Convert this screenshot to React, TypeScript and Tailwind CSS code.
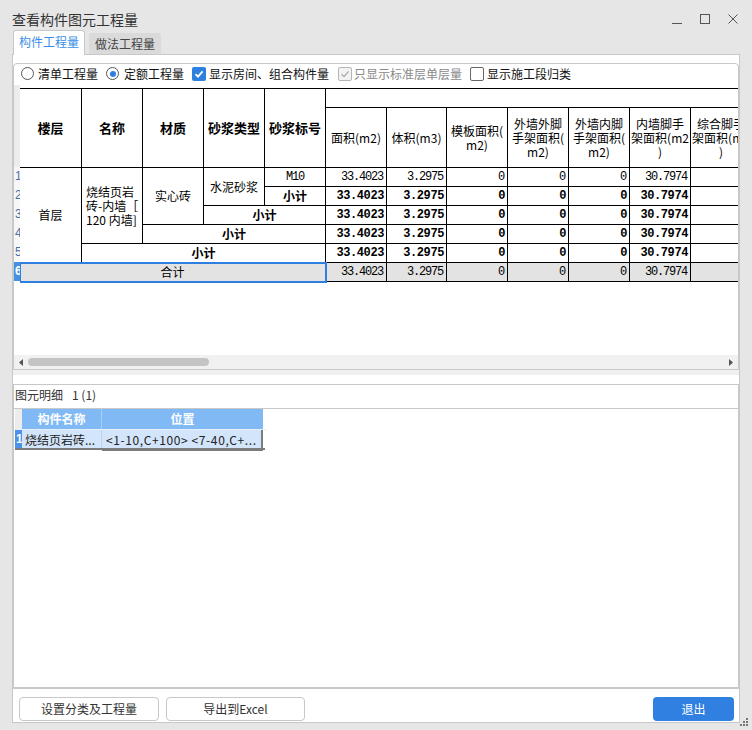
import React from 'react';

const cjk = "font-['Noto_Sans_CJK_SC',sans-serif]";
const mono = "font-['Liberation_Mono',monospace]";

function Radio({ checked }: { checked?: boolean }) {
  return (
    <span className="w-[13px] h-[13px] rounded-full border border-[#555] bg-white flex items-center justify-center shrink-0">
      {checked && <span className="w-[6px] h-[6px] rounded-full bg-[#2e7fe0]" />}
    </span>
  );
}

function Check({ state }: { state: 'on' | 'off' | 'dis' }) {
  if (state === 'on')
    return (
      <span className="w-[14px] h-[14px] rounded-[2px] bg-[#2d7fe0] flex items-center justify-center shrink-0">
        <svg width="10" height="10" viewBox="0 0 10 10">
          <path d="M1.5 5.2 L4 7.6 L8.6 2.4" fill="none" stroke="#fff" strokeWidth="1.8" />
        </svg>
      </span>
    );
  if (state === 'dis')
    return (
      <span className="w-[14px] h-[14px] rounded-[2px] border border-[#b5b5b5] bg-[#f3f3f3] flex items-center justify-center shrink-0">
        <svg width="10" height="10" viewBox="0 0 10 10">
          <path d="M1.5 5.2 L4 7.6 L8.6 2.4" fill="none" stroke="#a8a8a8" strokeWidth="1.3" />
        </svg>
      </span>
    );
  return <span className="block w-[14px] h-[14px] rounded-[2px] border border-[#666] bg-white shrink-0" />;
}

const cell = 'border border-black p-0';
const hdr = `${cell} text-[13px] font-bold text-center align-middle text-black leading-[16px]`;
const sub = `${cell} text-[12px] font-normal text-center align-middle text-black leading-[14px] whitespace-nowrap overflow-hidden`;
const numR = `${cell} ${mono} text-right pr-[3px] text-[12px] tracking-[-1.2px] leading-[14px] text-black`;
const numB = `${cell} ${mono} text-right pr-[2px] text-[12px] tracking-[-0.4px] font-bold leading-[14px] text-black`;

const vals = ['33.4023', '3.2975', '0', '0', '0', '30.7974', ''];

function Nums({ bold }: { bold?: boolean }) {
  return (
    <>
      {vals.map((v, i) => (
        <td key={i} className={bold ? numB : numR}>
          {v}
        </td>
      ))}
    </>
  );
}

const subt = `${cell} text-center text-[12px] font-bold leading-[14px] text-black`;

export default function App() {
  return (
    <div className={`w-[752px] h-[730px] bg-[#e6e6e6] flex flex-col relative overflow-hidden ${cjk} text-[#333]`}>
      {/* title bar */}
      <div className="flex items-start h-[30px] shrink-0">
        <div className="pl-[12px] pt-[9px] text-[14px] leading-[20px] text-[#333]">查看构件图元工程量</div>
        <div className="ml-auto mt-[14px] mr-[14px] flex gap-[18px]">
          <svg width="10" height="10" viewBox="0 0 10 10">
            <path d="M0 9.5 H10" stroke="#555" strokeWidth="1" />
          </svg>
          <svg width="10" height="10" viewBox="0 0 10 10">
            <rect x="0.5" y="0.5" width="9" height="9" fill="none" stroke="#555" strokeWidth="1" />
          </svg>
          <svg width="10" height="10" viewBox="0 0 10 10">
            <path d="M0.5 0.5 L9.5 9.5 M9.5 0.5 L0.5 9.5" stroke="#555" strokeWidth="1" />
          </svg>
        </div>
      </div>

      {/* tabs */}
      <div className="flex items-end h-[24px] pl-[13px] relative z-10 shrink-0">
        <div className="h-[25px] w-[72px] -mb-px bg-white border border-[#c8c8c8] border-b-0 rounded-t-[3px] flex items-center justify-center text-[12px] text-[#3a8ee6] leading-[16px] pb-[2px]">
          构件工程量
        </div>
        <div className="h-[21px] w-[72px] ml-[4px] bg-[#dadada] rounded-t-[2px] flex items-center justify-center text-[12px] text-[#444] leading-[16px]">
          做法工程量
        </div>
      </div>

      {/* panel */}
      <div className="ml-[12px] w-[728px] h-[669px] border border-[#c8c8c8] bg-white flex flex-col shrink-0">
        <div className="h-[8px] shrink-0" />
        {/* top box */}
        <div className="h-[307px] border border-[#c8c8c8] rounded-t-[4px] flex flex-col shrink-0 overflow-hidden">
          <div className="h-[21px] flex items-center pl-[7px] pb-[2px] text-[12px] leading-[16px] text-[#111] shrink-0">
            <Radio />
            <span className="ml-[4px]">清单工程量</span>
            <span className="ml-[8px]"><Radio checked /></span>
            <span className="ml-[5px]">定额工程量</span>
            <span className="ml-[8px]"><Check state="on" /></span>
            <span className="ml-[3px]">显示房间、组合构件量</span>
            <span className="ml-[9px]"><Check state="dis" /></span>
            <span className="ml-[2px] text-[#8a8a8a]">只显示标准层单层量</span>
            <span className="ml-[8px]"><Check state="off" /></span>
            <span className="ml-[3px]">显示施工段归类</span>
          </div>
          {/* grid */}
          <div className="h-[270px] flex shrink-0 bg-white">
            <div className="w-[6px] flex flex-col shrink-0 overflow-hidden text-[12px] leading-[19px] font-['Liberation_Sans',sans-serif]">
              <div className="h-[82px] bg-[#ececec] shrink-0" />
              {[1, 2, 3, 4, 5].map((n) => (
                <div key={n} className="h-[19px] text-[#4a6fa5] pl-[1px] bg-[#f7f7f7] shrink-0">
                  {n}
                </div>
              ))}
              <div className="h-[19px] bg-[#4a90e2] text-white font-bold pl-[1px] shrink-0">6</div>
            </div>
            <div className="w-[718px] overflow-hidden pt-[3px]">
              <table className="border-collapse table-fixed w-[732px] -ml-px">
                <colgroup>
                  <col className="w-[62px]" />
                  <col className="w-[61px]" />
                  <col className="w-[61px]" />
                  <col className="w-[61px]" />
                  <col className="w-[61px]" />
                  <col className="w-[61px]" />
                  <col className="w-[60px]" />
                  <col className="w-[61px]" />
                  <col className="w-[61px]" />
                  <col className="w-[61px]" />
                  <col className="w-[61px]" />
                  <col className="w-[61px]" />
                </colgroup>
                <tbody>
                  <tr className="h-[19px]">
                    <th rowSpan={2} className={hdr}>楼层</th>
                    <th rowSpan={2} className={hdr}>名称</th>
                    <th rowSpan={2} className={hdr}>材质</th>
                    <th rowSpan={2} className={hdr}>砂浆类型</th>
                    <th rowSpan={2} className={hdr}>砂浆标号</th>
                    <th colSpan={7} className={cell}></th>
                  </tr>
                  <tr className="h-[60px]">
                    <th className={sub}>面积(m2)</th>
                    <th className={sub}>体积(m3)</th>
                    <th className={sub}>模板面积(<br />m2)</th>
                    <th className={sub}>外墙外脚<br />手架面积(<br />m2)</th>
                    <th className={sub}>外墙内脚<br />手架面积(<br />m2)</th>
                    <th className={sub}>内墙脚手<br />架面积(m2<br />)</th>
                    <th className={sub}>综合脚手<br />架面积(m2<br />)</th>
                  </tr>
                  <tr className="h-[19px]">
                    <td rowSpan={5} className={`${cell} text-center text-[12px] leading-[14px] text-black`}>首层</td>
                    <td rowSpan={4} className={`${cell} text-left pl-[4px] text-[12px] leading-[14px] text-black whitespace-nowrap`}>
                      烧结页岩<br />砖-内墙［<br />120 内墙]
                    </td>
                    <td rowSpan={3} className={`${cell} text-center text-[12px] leading-[14px] text-black`}>实心砖</td>
                    <td rowSpan={2} className={`${cell} text-center text-[12px] leading-[14px] text-black`}>水泥砂浆</td>
                    <td className={`${cell} ${mono} text-center text-[12px] tracking-[-1.2px] leading-[14px] text-black`}>M10</td>
                    <Nums />
                  </tr>
                  <tr className="h-[19px]">
                    <td className={subt}>小计</td>
                    <Nums bold />
                  </tr>
                  <tr className="h-[19px]">
                    <td colSpan={2} className={subt}>小计</td>
                    <Nums bold />
                  </tr>
                  <tr className="h-[19px]">
                    <td colSpan={3} className={subt}>小计</td>
                    <Nums bold />
                  </tr>
                  <tr className="h-[19px]">
                    <td colSpan={4} className={subt}>小计</td>
                    <Nums bold />
                  </tr>
                  <tr className="h-[19px] bg-[#e3e3e3]">
                    <td colSpan={5} className={`${cell} text-center text-[12px] leading-[14px] text-black outline-2 outline-[#2e7fe0] -outline-offset-1`}>合计</td>
                    <Nums />
                  </tr>
                </tbody>
              </table>
            </div>
          </div>
          {/* scrollbar */}
          <div className="h-[14px] bg-[#f1f1f1] flex items-center shrink-0">
            <svg width="4" height="7" viewBox="0 0 4 7" className="ml-[5px]">
              <path d="M4 0 L0 3.5 L4 7 Z" fill="#555" />
            </svg>
            <div className="ml-[5px] w-[181px] h-[8px] rounded-full bg-[#c4c4c4]" />
            <svg width="4" height="7" viewBox="0 0 4 7" className="ml-auto mr-[5px]">
              <path d="M0 0 L4 3.5 L0 7 Z" fill="#555" />
            </svg>
          </div>
        </div>
        {/* splitter */}
        <div className="h-[14px] flex flex-col shrink-0">
          <div className="h-[5px] bg-[#f0f0f0]" />
          <div className="flex-1 bg-white" />
        </div>
        {/* lower box */}
        <div className="h-[305px] border border-[#c8c8c8] border-b-2 flex flex-col shrink-0">
          <div className="h-[23px] flex items-center pl-px pb-[4px] text-[12px] leading-[16px] text-[#333] shrink-0">
            <span>图元明细</span>
            <span className="ml-[9px]">1 (1)</span>
          </div>
          <div className="flex-1 border-t border-[#c8c8c8] pl-px">
            <div className="flex flex-col w-[251px]">
              <div className="flex h-[20px]">
                <div className="w-[7px] bg-[#ececec]" />
                <div className="w-[80px] bg-[#80b9f4] border-r border-[#a9cff6] text-white font-bold text-[12px] leading-[20px] text-center">构件名称</div>
                <div className="w-[161px] bg-[#80b9f4] text-white font-bold text-[12px] leading-[20px] text-center">位置</div>
              </div>
              <div className="flex h-[22px] border-t border-[#e6eef8]">
                <div className="w-[7px] h-[19px] bg-[#4b93e9] text-white font-bold text-[12px] leading-[19px] font-['Liberation_Sans',sans-serif] overflow-hidden pl-px">1</div>
                <div className="w-[80px] h-[19px] bg-[#d3e5fa] border-r border-[#b9d3ef] text-[12px] leading-[19px] text-[#222] pl-[3px] whitespace-nowrap overflow-hidden">烧结页岩砖...</div>
                <div className="w-[161px] h-[21px] bg-[#d3e5fa] border-r-2 border-b-2 border-[#7c7c7c] text-[12px] leading-[19px] text-[#222] pl-[4px] whitespace-nowrap overflow-hidden tracking-[0.6px]">
                  &lt;1-10,C+100&gt; &lt;7-40,C+...
                </div>
              </div>
              <div className="-mt-[3px] w-[250px] h-[2px] bg-[#7c7c7c]" />
            </div>
          </div>
        </div>
        {/* buttons */}
        <div className="h-[33px] flex items-start pt-[8px] pl-[6px] pr-[5px] shrink-0">
          <button className="w-[140px] h-[24px] bg-white border border-[#c8c8c8] rounded-[4px] text-[12px] leading-[16px] text-[#333]">设置分类及工程量</button>
          <button className="ml-[7px] w-[139px] h-[24px] bg-white border border-[#c8c8c8] rounded-[4px] text-[12px] leading-[16px] text-[#333]">导出到Excel</button>
          <button className="ml-auto w-[81px] h-[24px] bg-[#2f80e1] rounded-[4px] text-[12px] leading-[16px] text-white">退出</button>
        </div>
      </div>

      {/* resize grip */}
      <svg width="8" height="8" viewBox="0 0 8 8" className="absolute right-[4px] bottom-[4px]">
        <rect x="6" y="0" width="2" height="2" fill="#777" />
        <rect x="3" y="3" width="2" height="2" fill="#777" />
        <rect x="6" y="3" width="2" height="2" fill="#777" />
        <rect x="0" y="6" width="2" height="2" fill="#777" />
        <rect x="3" y="6" width="2" height="2" fill="#777" />
        <rect x="6" y="6" width="2" height="2" fill="#777" />
      </svg>
    </div>
  );
}
